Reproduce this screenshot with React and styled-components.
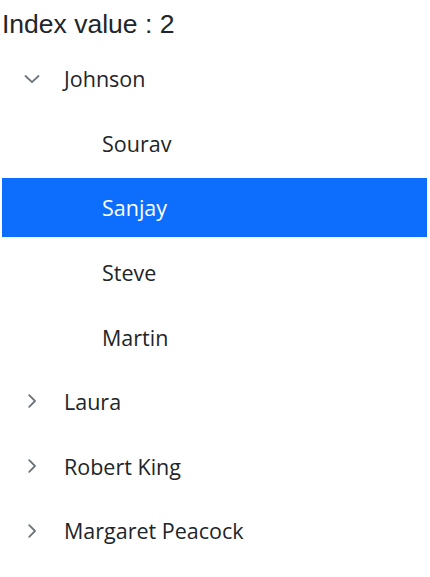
import React, { useState } from "react";
import styled, { createGlobalStyle } from "styled-components";

const Global = createGlobalStyle`
  html, body { margin: 0; padding: 0; background: #fff; }
  body { font-family: "Liberation Sans", Arial, sans-serif; }
`;

const Page = styled.div`
  padding: 0 3px 0 2px;
`;

const Title = styled.div`
  font-family: "Liberation Sans", Arial, sans-serif;
  font-size: 26.5px;
  line-height: 49px;
  height: 49px;
  color: #212529;
`;

const List = styled.div`
  display: flex;
  flex-direction: column;
  gap: 5.6px;
`;

const Row = styled.div`
  display: flex;
  align-items: center;
  height: 59px;
  padding-left: ${(p) => p.$level * 38}px;
  background: ${(p) => (p.$selected ? "#0d6efd" : "transparent")};
  color: ${(p) => (p.$selected ? "#ffffff" : "#212529")};
  cursor: pointer;
`;

const Toggle = styled.span`
  display: flex;
  align-items: center;
  width: 62px;
  padding-left: 18px;
  box-sizing: border-box;
  flex: none;
  color: #6c757d;
`;

const Label = styled.span`
  font-family: "Segoe UI", "Open Sans", "Noto Sans", sans-serif;
  font-size: 21.5px;
  line-height: 1;
  white-space: nowrap;
  padding-top: 1px;
`;

const Chevron = ({ open }) => (
  <svg width="24" height="24" viewBox="0 0 24 24" fill="none" stroke="currentColor" strokeWidth="1.8" strokeLinecap="round" strokeLinejoin="round">
    {open ? <path d="M5.5 9 L12 15.2 L18.5 9" /> : <path d="M9.2 6.2 L15 12 L9.2 17.8" />}
  </svg>
);

const data = [
  { name: "Johnson", children: ["Sourav", "Sanjay", "Steve", "Martin"] },
  { name: "Laura", children: ["Anne"] },
  { name: "Robert King", children: ["Mary"] },
  { name: "Margaret Peacock", children: ["Ken"] },
];

export default function App() {
  const [open, setOpen] = useState({ Johnson: true });
  const [selected, setSelected] = useState("Sanjay");
  const rows = [];
  data.forEach((n) => {
    rows.push(
      <Row key={n.name} $level={0} $selected={selected === n.name} onClick={() => setOpen({ ...open, [n.name]: !open[n.name] })}>
        <Toggle><Chevron open={!!open[n.name]} /></Toggle>
        <Label>{n.name}</Label>
      </Row>
    );
    if (open[n.name]) {
      n.children.forEach((c) =>
        rows.push(
          <Row key={c} $level={1} $selected={selected === c} onClick={() => setSelected(c)}>
            <Toggle />
            <Label>{c}</Label>
          </Row>
        )
      );
    }
  });
  const idx = data[0].children.indexOf(selected);
  return (
    <Page>
      <Global />
      <Title>Index value : {idx >= 0 ? idx + 1 : 0}</Title>
      <List>{rows}</List>
    </Page>
  );
}
